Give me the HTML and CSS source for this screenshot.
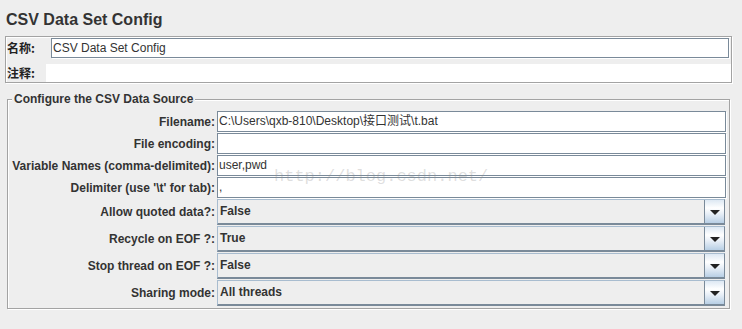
FILE: index.html
```html
<!DOCTYPE html>
<html>
<head>
<meta charset="utf-8">
<link rel="stylesheet" href="styles.css">
</head>
<body>
<div class="title">CSV Data Set Config</div>
<div class="namebox">
  <div class="nrow">
    <span class="nlabel n1">名称:</span>
    <div class="nfield">CSV Data Set Config</div>
  </div>
  <div class="nrow r2">
    <span class="nlabel n2">注释:</span>
    <div class="narea"></div>
  </div>
</div>
<fieldset class="src">
  <legend>Configure the CSV Data Source</legend>
  <div class="grid">
    <label>Filename:</label>
    <div class="tf">C:\Users\qxb-810\Desktop\接口测试\t.bat</div>
    <label>File encoding:</label>
    <div class="tf"></div>
    <label>Variable Names (comma-delimited):</label>
    <div class="tf">user,pwd</div>
    <label>Delimiter (use '\t' for tab):</label>
    <div class="tf">,</div>
    <label>Allow quoted data?:</label>
    <div class="combo"><span class="cval">False</span><span class="cbtn"><span class="arrow"></span></span></div>
    <label>Recycle on EOF ?:</label>
    <div class="combo"><span class="cval">True</span><span class="cbtn"><span class="arrow"></span></span></div>
    <label>Stop thread on EOF ?:</label>
    <div class="combo"><span class="cval">False</span><span class="cbtn"><span class="arrow"></span></span></div>
    <label>Sharing mode:</label>
    <div class="combo"><span class="cval">All threads</span><span class="cbtn"><span class="arrow"></span></span></div>
  </div>
</fieldset>
<div class="watermark">http://blog.csdn.net/</div>
</body>
</html>
```
FILE: styles.css
```css
html, body {
  margin: 0;
  padding: 0;
  background: #eeeeee;
}
body {
  font-family: "Liberation Sans", Arial, "Noto Sans CJK SC", sans-serif;
  font-size: 12px;
  color: #333333;
  width: 742px;
  height: 329px;
  overflow: hidden;
  position: relative;
}
.title {
  padding: 9px 0 0 6px;
  height: 21px;
  line-height: 21px;
  font-size: 16px;
  font-weight: bold;
  color: #333333;
}
.namebox {
  margin: 6px 0 0 5px;
  width: 727px;
  height: 47px;
  box-sizing: border-box;
  border: 1px solid #a3a3a3;
  box-shadow: 1px 1px 0 #ffffff, inset 1px 1px 0 #ffffff;
  padding: 1px 0 0 1px;
}
.nrow {
  display: flex;
  align-items: center;
  height: 20px;
}
.nrow.r2 {
  margin-top: 6px;
  height: 18px;
}
.nlabel {
  font-family: "Noto Sans CJK SC", sans-serif;
  font-weight: bold;
  font-size: 12px;
  color: #222222;
  line-height: 14px;
}
.n1 { width: 44px; }
.n2 { width: 39px; }
.nfield {
  flex: 1;
  height: 20px;
  box-sizing: border-box;
  margin-right: 2px;
  border: 1px solid #7a8a99;
  box-shadow: 1px 1px 0 #ffffff;
  background: #ffffff;
  padding-left: 1px;
  line-height: 18px;
  color: #333333;
}
.narea {
  flex: 1;
  height: 18px;
  background: #ffffff;
}
.src {
  margin: 9px 0 0 7px;
  width: 723px;
  height: 217px;
  box-sizing: border-box;
  padding: 5px 3px 2px 0;
  border: 1px solid #a3a3a3;
  box-shadow: 1px 1px 0 #ffffff, inset 1px 1px 0 #ffffff;
  min-inline-size: 0;
}
.src legend {
  font-weight: bold;
  line-height: 14px;
  padding: 0 2px;
  margin-left: 4px;
  background: #eeeeee;
  color: #333333;
}
.grid {
  display: grid;
  grid-template-columns: 207px 1fr;
  grid-auto-rows: auto;
  column-gap: 2px;
  row-gap: 1px;
}
.grid label {
  font-weight: bold;
  text-align: right;
  align-self: center;
  white-space: nowrap;
  color: #333333;
}
.tf {
  height: 21px;
  box-sizing: border-box;
  border: 1px solid #7a8a99;
  box-shadow: 1px 1px 0 #ffffff;
  background: #ffffff;
  padding-left: 1px;
  line-height: 19px;
  white-space: nowrap;
  overflow: hidden;
}
.combo {
  height: 26px;
  box-sizing: border-box;
  display: flex;
  border-top: 1px solid #a8bccf;
  border-left: 1px solid #a8bccf;
  border-right: 1px solid #7a8a99;
  border-bottom: 2px solid #7a8a99;
  background: #eeeeee;
  margin-right: 1px;
}
.cval {
  flex: 1;
  font-weight: bold;
  padding-left: 2px;
  line-height: 23px;
  border-right: 1px solid #7a8a99;
}
.cbtn {
  width: 19px;
  display: flex;
  align-items: center;
  justify-content: center;
  background: linear-gradient(to bottom, #dde8f3 0%, #ffffff 35%, #e8eff7 60%, #b8cfe5 100%);
}
.arrow {
  width: 0;
  height: 0;
  border-left: 5px solid transparent;
  border-right: 5px solid transparent;
  border-top: 5px solid #222222;
  margin-top: 1px;
}
.watermark {
  position: absolute;
  left: 274px;
  top: 168px;
  font-family: "Liberation Mono", "Courier New", monospace;
  font-size: 17px;
  line-height: 17px;
  color: rgba(140, 140, 140, 0.28);
  pointer-events: none;
}
```
